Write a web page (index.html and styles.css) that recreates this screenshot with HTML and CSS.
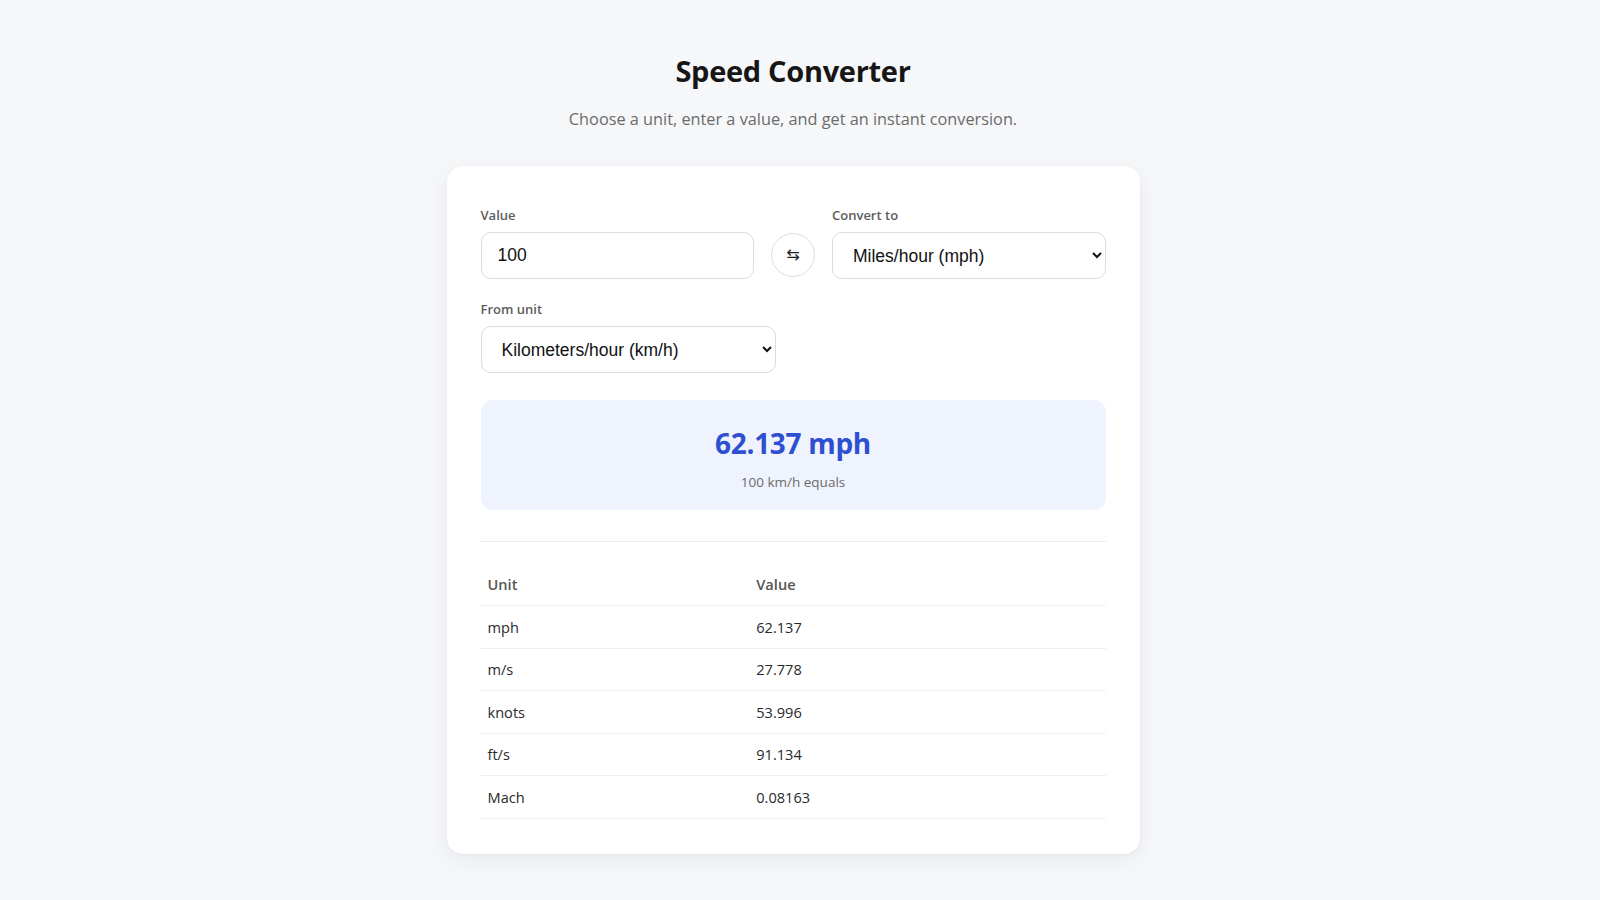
FILE: index.html
```html
<!DOCTYPE html>
<html lang="en">
<head>
<meta charset="utf-8">
<title>Speed Converter</title>
<link rel="stylesheet" href="styles.css">
</head>
<body>
<main class="page">
  <header class="hero">
    <h1 class="title">Speed Converter</h1>
    <p class="subtitle">Choose a unit, enter a value, and get an instant conversion.</p>
  </header>
  <section class="card">
    <div class="top-row">
      <div class="field">
        <label class="label" for="val">Value</label>
        <input id="val" class="control" type="text" value="100">
      </div>
      <button class="swap" type="button" aria-label="Swap units">⇆</button>
      <div class="field">
        <label class="label" for="to">Convert to</label>
        <select id="to" class="control">
          <option>Miles/hour (mph)</option>
        </select>
      </div>
    </div>
    <div class="field from-field">
      <label class="label" for="from">From unit</label>
      <select id="from" class="control from-select">
        <option>Kilometers/hour (km/h)</option>
      </select>
    </div>
    <div class="result">
      <div class="result-value">62.137 mph</div>
      <div class="result-note">100 km/h equals</div>
    </div>
    <hr class="divider">
    <table class="table">
      <thead>
        <tr><th class="col-unit">Unit</th><th>Value</th></tr>
      </thead>
      <tbody>
        <tr><td>mph</td><td>62.137</td></tr>
        <tr><td>m/s</td><td>27.778</td></tr>
        <tr><td>knots</td><td>53.996</td></tr>
        <tr><td>ft/s</td><td>91.134</td></tr>
        <tr><td>Mach</td><td>0.08163</td></tr>
      </tbody>
    </table>
  </section>
</main>
</body>
</html>
```

FILE: styles.css
```css
* { box-sizing: border-box; }
html, body { margin: 0; padding: 0; }
body {
  background: #f6f7f9;
  font-family: "Open Sans", "Noto Sans", "Liberation Sans", sans-serif;
  color: #1c1c1c;
}
.page {
  display: flex;
  flex-direction: column;
  align-items: center;
  padding: 50px 14px 40px 0;
}
.hero { text-align: center; }
.title {
  margin: 0;
  font-size: 29px;
  font-weight: 700;
  color: #161616;
  line-height: 42px;
  letter-spacing: -0.3px;
}
.subtitle {
  margin: 15px 0 0;
  font-size: 16.3px;
  color: #6b6b6b;
  line-height: 24px;
}
.card {
  margin-top: 35px;
  width: 693px;
  background: #ffffff;
  border-radius: 16px;
  box-shadow: 0 6px 24px rgba(20, 30, 60, 0.06), 0 1px 3px rgba(20, 30, 60, 0.04);
  padding: 40px 34px 35px;
}
.top-row {
  display: grid;
  grid-template-columns: 1fr 44px 1fr;
  column-gap: 17px;
  align-items: end;
}
.field { display: flex; flex-direction: column; }
.label {
  font-size: 13px;
  font-weight: 600;
  color: #5c5c5c;
  line-height: 18px;
  margin-bottom: 8px;
}
.control {
  height: 47px;
  border: 1px solid #dcdcdc;
  border-radius: 10px;
  background: #ffffff;
  font-family: "Liberation Sans", Arial, sans-serif;
  font-size: 17.5px;
  color: #111;
  padding: 0 16px;
  outline: none;
}
select.control { padding: 0 12px 0 16px; }
.swap {
  width: 44px;
  height: 44px;
  margin-bottom: 2px;
  border-radius: 50%;
  border: 1px solid #dedede;
  background: #ffffff;
  color: #222;
  font-family: "DejaVu Sans", sans-serif;
  font-size: 16px;
  line-height: 1;
  padding: 0;
  display: flex;
  align-items: center;
  justify-content: center;
}
.from-field { margin-top: 21px; align-items: flex-start; }
.from-select { width: 295px; }
.result {
  margin-top: 27px;
  height: 110px;
  background: #eff3fe;
  border-radius: 12px;
  display: flex;
  flex-direction: column;
  align-items: center;
  padding-top: 25px;
}
.result-value {
  font-size: 28px;
  font-weight: 700;
  color: #2e4fcf;
  line-height: 36px;
  letter-spacing: -0.3px;
}
.result-note {
  margin-top: 12px;
  font-size: 13.5px;
  color: #6b6b6b;
  line-height: 18px;
}
.divider {
  margin: 31px 0 21px;
  border: 0;
  border-top: 1px solid #ececec;
}
.table {
  width: 100%;
  border-collapse: collapse;
  font-size: 14.6px;
}
.table th, .table td {
  text-align: left;
  padding: 0 7px;
  height: 42.5px;
  border-bottom: 1px solid #efefef;
}
.table th {
  font-weight: 600;
  color: #555;
}
.table td { color: #2a2a2a; }
.col-unit { width: 43%; }
```
